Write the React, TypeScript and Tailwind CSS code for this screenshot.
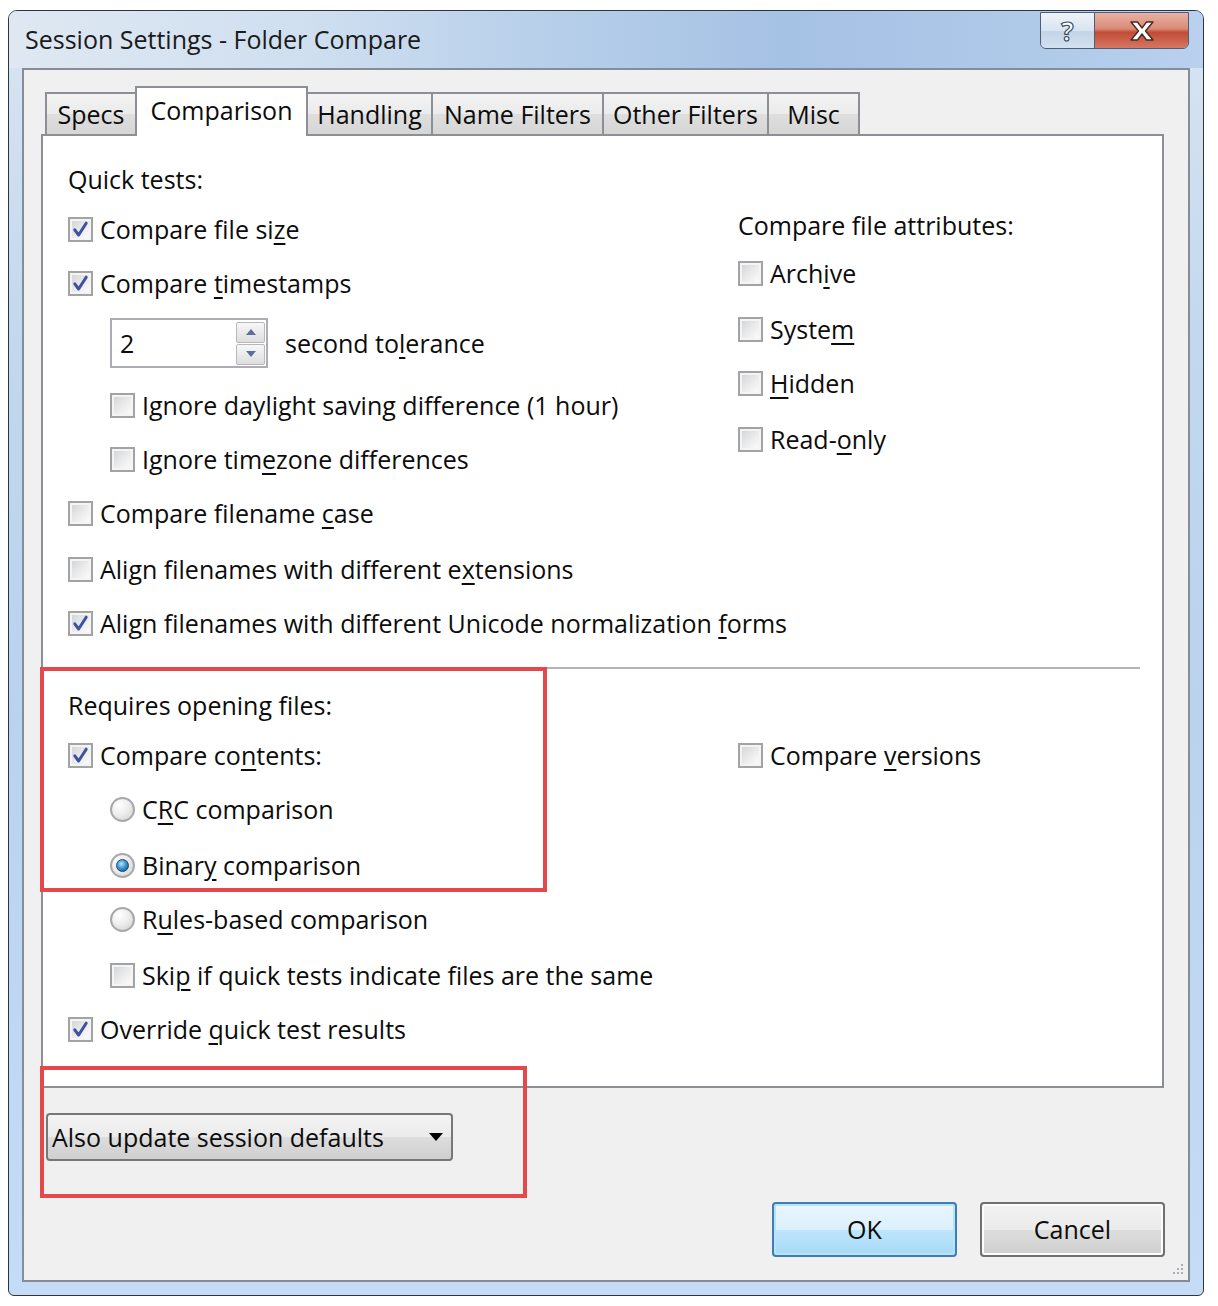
import React from "react";

const FONT = "font-['Open_Sans','Noto_Sans',sans-serif]";

function Lbl({ t, u }: { t: string; u?: number }) {
  if (u === undefined) return <span className="whitespace-nowrap">{t}</span>;
  return (
    <span className="whitespace-nowrap">
      {t.slice(0, u)}
      <span className="underline decoration-[1.5px] underline-offset-[4px]">{t[u]}</span>
      {t.slice(u + 1)}
    </span>
  );
}

function Box({ on }: { on?: boolean }) {
  return (
    <span className="relative flex h-[25px] w-[25px] shrink-0 items-center justify-center border-2 border-[#a3a3a3] bg-[#f4f4f4]">
      <span className="absolute inset-[2px] bg-[linear-gradient(135deg,#d3d6da_0%,#ececec_55%,#fbfbfb_100%)]" />
      {on && (
        <svg className="relative" width="17" height="17" viewBox="0 0 17 17">
          <path d="M2.8 8.8 L6.6 14 L14.2 2.2" fill="none" stroke="#3d53a0" strokeWidth="3" strokeLinejoin="round" strokeLinecap="round" />
        </svg>
      )}
    </span>
  );
}

function Radio({ on }: { on?: boolean }) {
  return (
    <span className="flex h-[25px] w-[25px] shrink-0 items-center justify-center rounded-full border-2 border-[#a8a8a8] bg-[radial-gradient(circle_at_35%_30%,#ffffff_0%,#eeeeee_45%,#cfcfcf_100%)]">
      {on && (
        <span className="h-[13px] w-[13px] rounded-full border border-[#17466f] bg-[radial-gradient(circle_at_40%_35%,#b6e4fb_0%,#3f98d4_45%,#0e4777_100%)]" />
      )}
    </span>
  );
}

function Spin() {
  return (
    <div className="flex h-[50px] w-[158px] shrink-0 items-center border-2 border-[#acaeb4] bg-white pl-[8px] pr-[1px]">
      <span className="flex-1">2</span>
      <div className="flex flex-col gap-[1px]">
        {[0, 1].map((i) => (
          <div
            key={i}
            className="flex h-[21px] w-[29px] items-center justify-center rounded-[2px] border border-[#b8b8b8] bg-[linear-gradient(to_bottom,#f7f7f7,#dedede)]"
          >
            <svg width="10" height="6" viewBox="0 0 10 6">
              {i === 0 ? <path d="M0 6 L5 0 L10 6 Z" fill="#5b6f9c" /> : <path d="M0 0 L5 6 L10 0 Z" fill="#5b6f9c" />}
            </svg>
          </div>
        ))}
      </div>
    </div>
  );
}

type Row = {
  k: "label" | "check" | "radio" | "spin";
  t?: string;
  u?: number;
  on?: boolean;
  ind?: boolean;
  h: number;
};

function Rows({ rows }: { rows: Row[] }) {
  return (
    <div className="flex flex-col">
      {rows.map((r, i) => (
        <div key={i} style={{ height: r.h }} className={r.ind ? "pl-[42px]" : ""}>
          <div className="flex h-[30px] items-center">
            {r.k === "label" && <Lbl t={r.t!} />}
            {r.k === "check" && (
              <span className="flex items-center gap-[7px]">
                <Box on={r.on} />
                <Lbl t={r.t!} u={r.u} />
              </span>
            )}
            {r.k === "radio" && (
              <span className="flex items-center gap-[7px]">
                <Radio on={r.on} />
                <Lbl t={r.t!} u={r.u} />
              </span>
            )}
            {r.k === "spin" && (
              <span className="flex items-center gap-[17px]">
                <Spin />
                <Lbl t="second tolerance" u={9} />
              </span>
            )}
          </div>
        </div>
      ))}
    </div>
  );
}

const topLeft: Row[] = [
  { k: "label", t: "Quick tests:", h: 50 },
  { k: "check", t: "Compare file size", u: 15, on: true, h: 54 },
  { k: "check", t: "Compare timestamps", u: 8, on: true, h: 60 },
  { k: "spin", ind: true, h: 62 },
  { k: "check", t: "Ignore daylight saving difference (1 hour)", u: 12, ind: true, h: 54 },
  { k: "check", t: "Ignore timezone differences", u: 10, ind: true, h: 54 },
  { k: "check", t: "Compare filename case", u: 17, h: 56 },
  { k: "check", t: "Align filenames with different extensions", u: 32, h: 54 },
  { k: "check", t: "Align filenames with different Unicode normalization forms", u: 53, on: true, h: 30 },
];

const topRight: Row[] = [
  { k: "label", t: "Compare file attributes:", h: 48 },
  { k: "check", t: "Archive", u: 4, h: 56 },
  { k: "check", t: "System", u: 5, h: 54 },
  { k: "check", t: "Hidden", u: 0, h: 56 },
  { k: "check", t: "Read-only", u: 5, h: 30 },
];

const botLeft: Row[] = [
  { k: "label", t: "Requires opening files:", h: 50 },
  { k: "check", t: "Compare contents:", u: 10, on: true, h: 54 },
  { k: "radio", t: "CRC comparison", u: 1, ind: true, h: 56 },
  { k: "radio", t: "Binary comparison", u: 5, on: true, ind: true, h: 54 },
  { k: "radio", t: "Rules-based comparison", u: 1, ind: true, h: 56 },
  { k: "check", t: "Skip if quick tests indicate files are the same", u: 3, ind: true, h: 54 },
  { k: "check", t: "Override quick test results", u: 9, on: true, h: 30 },
];

const botRight: Row[] = [{ k: "check", t: "Compare versions", u: 8, h: 30 }];

const tabs = [
  { t: "Specs", w: 92 },
  { t: "Comparison", w: 173, active: true },
  { t: "Handling", w: 127 },
  { t: "Name Filters", w: 173 },
  { t: "Other Filters", w: 167 },
  { t: "Misc", w: 93 },
];

export default function App() {
  return (
    <div className={`relative min-h-[1306px] w-[1218px] bg-white pl-[8px] pt-[10px] text-[25px] leading-none text-[#0c0c0c] ${FONT}`}>
      {/* window */}
      <div className="flex h-[1286px] w-[1196px] flex-col overflow-hidden rounded-t-[9px] rounded-b-[6px] border border-[#2d3540] bg-[linear-gradient(to_bottom,#d9e5f2_0%,#c3d8ee_25%,#b9d2ee_55%,#c4dcf6_100%)]">
        {/* title bar */}
        <div className="flex h-[57px] shrink-0 items-start bg-[linear-gradient(to_right,#dfe8f2_0%,#cfdff0_25%,#b7cfea_45%,#a5c1e4_65%,#afc9e9_85%,#b9d1ee_100%)] pl-[16px] pr-[14px]">
          <div className="mt-[16px] flex-1 text-[25px] text-[#1a1a1a]">Session Settings - Folder Compare</div>
          <div className="mt-[1px] flex h-[37px] overflow-hidden rounded-b-[6px] border border-[#4e5e74]">
            <div className="flex w-[54px] items-center justify-center border-r border-[#4e5e74] bg-[linear-gradient(to_bottom,#eef3f9_0%,#d8e4f1_50%,#c3d4e8_51%,#d3e1f0_100%)]">
              <span className="text-[26px] font-bold text-white [-webkit-text-stroke:1.2px_#3a4d68]">?</span>
            </div>
            <div className="flex w-[93px] items-center justify-center bg-[linear-gradient(to_bottom,#e9b2a4_0%,#d98a77_45%,#c24c35_55%,#d47763_100%)]">
              <svg width="26" height="20" viewBox="0 0 26 20">
                <path
                  d="M2 1 H8.5 L13 7 L17.5 1 H24 L16.5 10 L24 19 H17.5 L13 13 L8.5 19 H2 L9.5 10 Z"
                  fill="#ffffff"
                  stroke="#4a2a24"
                  strokeWidth="1.4"
                  strokeLinejoin="round"
                />
              </svg>
            </div>
          </div>
        </div>

        {/* body */}
        <div className="flex flex-1 px-[13px] pb-[13px]">
          <div className="relative flex flex-1 flex-col border-2 border-[#848d98] bg-[#f0f0f0] pl-[17px] pt-[16px]">
            {/* tab headers */}
            <div className="relative z-10 flex h-[48px] items-end pl-[4px]">
              {tabs.map((tb) =>
                tb.active ? (
                  <div
                    key={tb.t}
                    style={{ width: tb.w }}
                    className="relative z-20 -mb-[2px] -ml-[2px] flex h-[50px] items-center justify-center border-2 border-b-0 border-[#8c8f96] bg-white pb-[4px]"
                  >
                    {tb.t}
                  </div>
                ) : (
                  <div
                    key={tb.t}
                    style={{ width: tb.w }}
                    className="-ml-[2px] flex h-[42px] items-center justify-center border-2 border-b-0 border-[#8c8f96] bg-[linear-gradient(to_bottom,#f3f3f3_0%,#ebebeb_50%,#dedede_51%,#d6d6d6_100%)] first:ml-0"
                  >
                    {tb.t}
                  </div>
                )
              )}
            </div>

            {/* tab panel */}
            <div className="h-[954px] w-[1123px] border-2 border-[#8c8f96] bg-white pl-[25px] pt-[28px]">
              <div className="flex">
                <div className="w-[670px]">
                  <Rows rows={topLeft} />
                </div>
                <div className="pt-[46px]">
                  <Rows rows={topRight} />
                </div>
              </div>
              <div className="mt-[29px] h-[2px] w-[1072px] bg-[#b4b4b4]" />
              <div className="mt-[21px] flex">
                <div className="w-[670px]">
                  <Rows rows={botLeft} />
                </div>
                <div className="pt-[50px]">
                  <Rows rows={botRight} />
                </div>
              </div>
            </div>

            {/* dropdown */}
            <div className="ml-[5px] mt-[25px] flex h-[48px] w-[407px] items-center justify-between rounded-[4px] border-2 border-[#777] bg-[linear-gradient(to_bottom,#f3f3f3_0%,#ebebeb_50%,#dddddd_51%,#cfcfcf_100%)] pl-[4px] pr-[8px]">
              <span>Also update session defaults</span>
              <svg width="14" height="8" viewBox="0 0 14 8">
                <path d="M0 0 H14 L7 8 Z" fill="#000" />
              </svg>
            </div>

            {/* buttons */}
            <div className="mt-[41px] flex justify-end gap-[23px] pr-[23px]">
              <div className="flex h-[55px] w-[185px] items-center justify-center rounded-[4px] border-2 border-[#3d7fb4] bg-[linear-gradient(to_bottom,#eaf6fd_0%,#d9f0fc_50%,#bee6fd_51%,#a7d9f5_100%)] shadow-[inset_0_0_0_2px_#b8e3f8]">
                OK
              </div>
              <div className="flex h-[55px] w-[185px] items-center justify-center rounded-[4px] border-2 border-[#707070] bg-[linear-gradient(to_bottom,#f2f2f2_0%,#ebebeb_50%,#dddddd_51%,#cfcfcf_100%)] shadow-[inset_0_0_0_2px_#fcfcfc]">
                Cancel
              </div>
            </div>

            {/* size grip */}
            <svg className="absolute bottom-[4px] right-[4px]" width="14" height="14" viewBox="0 0 14 14">
              {[
                [11, 2],
                [11, 6],
                [7, 6],
                [11, 10],
                [7, 10],
                [3, 10],
              ].map(([x, y], i) => (
                <rect key={i} x={x} y={y} width="2" height="2" fill="#a9aeb5" />
              ))}
            </svg>
          </div>
        </div>
      </div>

      {/* red annotation boxes */}
      <div className="pointer-events-none absolute left-[40px] top-[667px] h-[225px] w-[507px] border-4 border-[#e4484c]" />
      <div className="pointer-events-none absolute left-[40px] top-[1066px] h-[132px] w-[487px] border-4 border-[#e4484c]" />
    </div>
  );
}
